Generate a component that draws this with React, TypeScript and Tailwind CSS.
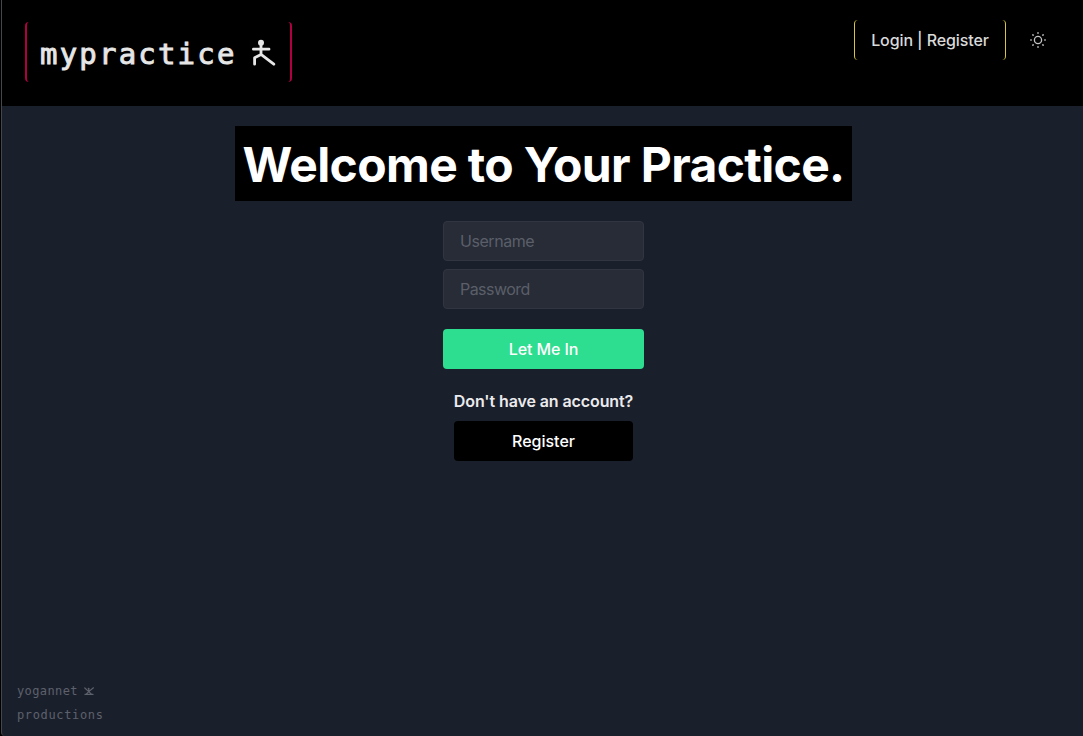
function StandingFigure() {
  return (
    <svg className="ml-[13px] mt-px h-7 w-[26px] shrink-0" viewBox="0 0 26 28" fill="none" stroke="#e6e6e6" strokeWidth="2.8" strokeLinecap="round" strokeLinejoin="round">
      <circle cx="11" cy="3.8" r="3" fill="#e6e6e6" stroke="none" />
      <path d="M3.4 10.2H19M11 5V15.4M11 15.4L4.6 18.8V25.2M11 15.4L23.8 25.2" />
    </svg>
  );
}

function SeatedFigure() {
  return (
    <svg className="ml-[5px] h-[10px] w-[10px] shrink-0" viewBox="0 0 10 10" fill="none" stroke="#5d616b" strokeWidth="1.2" strokeLinecap="round" strokeLinejoin="round">
      <path d="M.8 2L4.8 5.6L9.4 1.8M4.8 3V6M2.2 8.2L4.8 5.6L7.4 8.2M1 8.4H9" />
      <circle cx="4.6" cy="2.6" r="0.9" fill="#5d616b" stroke="none" />
    </svg>
  );
}

function Sun() {
  return (
    <svg className="size-4" viewBox="0 0 16 16" fill="none" stroke="#c4c4c4" strokeLinecap="round">
      <circle cx="8" cy="8" r="3.6" strokeWidth="1.3" />
      <path strokeWidth="1.5" d="M8 .8V1.2M8 14.8V15.2M.8 8H1.2M14.8 8H15.2M2.9 2.9L3.1 3.1M12.9 12.9L13.1 13.1M2.9 13.1L3.1 12.9M12.9 3.1L13.1 2.9" />
    </svg>
  );
}

export default function App() {
  return (
    <div className="h-[736px] border-l border-black bg-black font-['Inter',sans-serif] text-base">
      <div className="flex h-full flex-col rounded-bl-sm border-l border-[#45474b] bg-[#1a1f2c]">
        <header className="flex h-[106px] shrink-0 items-start justify-between bg-black pl-[23px] pr-[37px]">
          <a className="mt-[22px] flex h-[60px] w-[267px] items-center rounded border-x-2 border-[#b00040] pl-[13px] font-['DejaVu_Sans_Mono',monospace] text-[29px] leading-none tracking-[2.2px] text-[#e6e6e6]">
            <span className="mt-1 whitespace-nowrap [-webkit-text-stroke:0.9px_#e6e6e6]">mypractice</span>
            <StandingFigure />
          </a>
          <nav className="mt-5 flex h-10 items-center">
            <button className="h-10 w-[152px] whitespace-nowrap rounded border-x border-[#d9c53f] font-medium tracking-[-0.1px] text-[#d9d9d9]">Login | Register</button>
            <button className="ml-6 grid size-4 place-items-center" aria-label="Toggle color mode"><Sun /></button>
          </nav>
        </header>
        <main className="flex flex-1 flex-col items-center pl-[3px] pr-px pt-5">
          <h1 className="flex h-[75px] w-[617px] items-center justify-center whitespace-nowrap bg-black pt-0.5 text-[48px] font-bold tracking-[-0.64px] text-white">Welcome to Your Practice.</h1>
          <form className="mt-5 flex w-[201px] flex-col" onSubmit={(e) => e.preventDefault()}>
            <input className="h-10 rounded border border-[#303541] bg-[#272c37] px-4 tracking-[-0.45px] placeholder:text-[#5b5f69] placeholder:opacity-100" placeholder="Username" />
            <input className="mt-2 h-10 rounded border border-[#303541] bg-[#272c37] px-4 tracking-[-0.55px] placeholder:text-[#5b5f69] placeholder:opacity-100" placeholder="Password" type="password" />
            <button className="mt-5 h-10 rounded bg-[#2ddd90] font-medium tracking-[-0.1px] text-white">Let Me In</button>
          </form>
          <p className="mt-5 whitespace-nowrap font-semibold leading-6 tracking-[-0.1px] text-[#ebebed]">Don't have an account?</p>
          <button className="mt-2 h-10 w-[179px] rounded bg-black font-medium text-white">Register</button>
        </main>
        <footer className="flex h-[57px] shrink-0 flex-col pl-[15px] font-['DejaVu_Sans_Mono',monospace] text-[12px] leading-6 tracking-[0.65px] text-[#5d616b]">
          <div className="flex h-6 items-center"><span className="w-[62px] tracking-[0.4px]">yogannet</span><SeatedFigure /></div>
          <div className="h-6">productions</div>
        </footer>
      </div>
    </div>
  );
}
